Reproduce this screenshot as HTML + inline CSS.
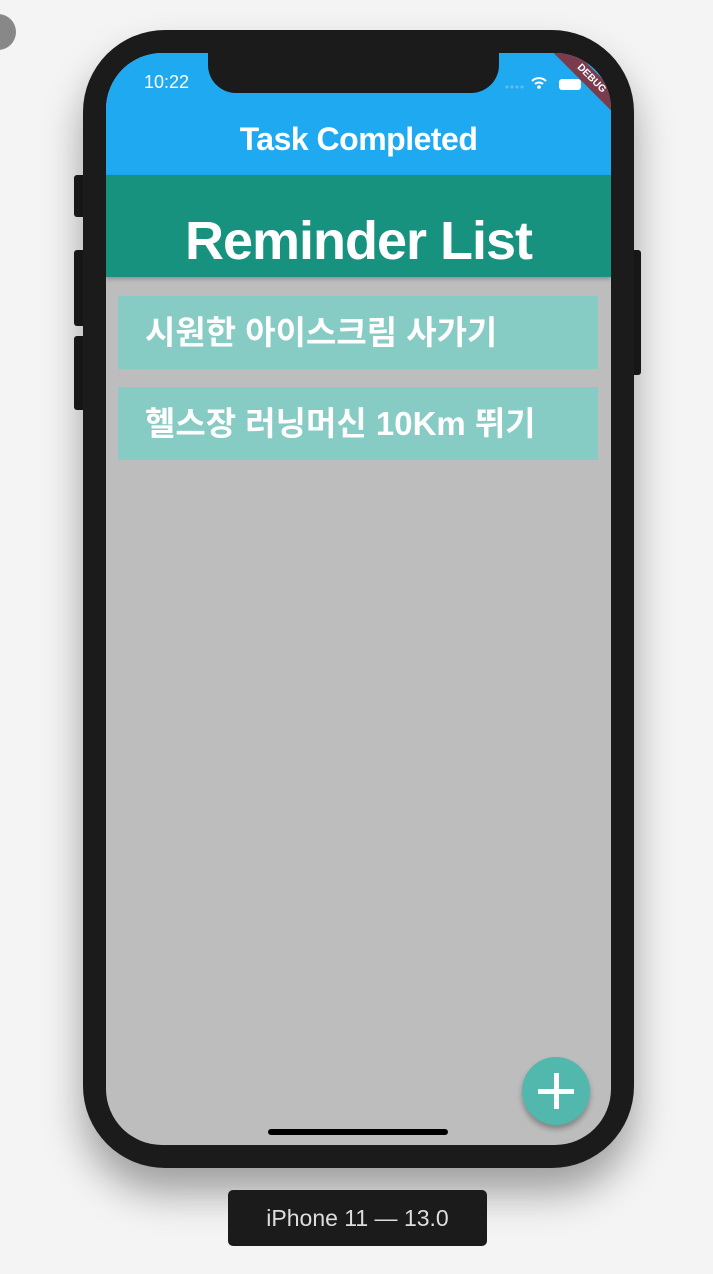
<!DOCTYPE html>
<html><head><meta charset="utf-8"><style>
body{margin:0;width:713px;height:1274px;background:#f4f4f4;position:relative;overflow:hidden;font-family:"Liberation Sans","Noto Sans CJK KR",sans-serif}
.btn{position:absolute;background:#1b1b1b;border-radius:3px}
.phone{position:absolute;left:83px;top:30px;width:551px;height:1138px;background:#1b1b1b;border-radius:82px;box-shadow:0 25px 40px rgba(0,0,0,.35)}
.screen{position:absolute;left:106px;top:53px;width:505px;height:1092px;border-radius:56px;overflow:hidden;background:#bdbdbd}
.bar{position:absolute;left:0;top:0;width:505px;height:122px;background:#1ea9f0}
.notch{position:absolute;left:102px;top:0;width:291px;height:40px;background:#1b1b1b;border-radius:0 0 28px 28px}
.teal{position:absolute;left:0;top:122px;width:505px;height:102px;background:#16927f;box-shadow:0 2px 4px rgba(0,0,0,.25)}
.item{position:absolute;left:12px;width:480px;height:73px;background:#86cbc4;color:#fff;font-size:33px;font-weight:bold;line-height:73px;padding-left:27px;box-sizing:border-box;margin-top:-4px;white-space:nowrap}
.fab{position:absolute;left:416px;top:1004px;width:68px;height:68px;border-radius:50%;background:#52b7ad;box-shadow:0 4px 6px rgba(0,0,0,.3)}
</style></head><body>
<div class="btn" style="left:74px;top:175px;width:12px;height:42px"></div>
<div class="btn" style="left:74px;top:250px;width:12px;height:76px"></div>
<div class="btn" style="left:74px;top:336px;width:12px;height:74px"></div>
<div class="btn" style="left:631px;top:250px;width:10px;height:125px"></div>
<div class="phone"></div>
<div class="screen">
<div class="bar"></div>
<div class="notch"></div>
<div style="position:absolute;left:38px;top:19px;color:#fff;font-size:18px">10:22</div>
<svg style="position:absolute;left:398px;top:20px" width="90" height="20"><g fill="#5bbff2"><circle cx="3" cy="14" r="1.6"/><circle cx="8" cy="14" r="1.6"/><circle cx="13" cy="14" r="1.6"/><circle cx="18" cy="14" r="1.6"/></g><path d="M28 8a10 10 0 0 1 14 0M31 11a6 6 0 0 1 8 0" stroke="#fff" stroke-width="2" fill="none"/><circle cx="35" cy="14" r="1.8" fill="#fff"/><rect x="55" y="6" width="22" height="11" rx="3" fill="#fff"/></svg>
<div style="position:absolute;left:430px;top:18px;width:110px;height:16px;background:#7a3b4c;transform:rotate(45deg);color:#fff;font-size:10px;font-weight:bold;text-align:center;line-height:16px">DEBUG</div>
<div style="position:absolute;left:0;top:68px;width:505px;text-align:center;color:#fff;font-size:32px;font-weight:bold;letter-spacing:-0.5px">Task Completed</div>
<div class="teal"><div style="position:absolute;left:0;top:32px;width:505px;text-align:center;color:#fff;font-size:54px;font-weight:bold;letter-spacing:-1px;line-height:68px">Reminder List</div></div>
<div class="item" style="top:247px">시원한 아이스크림 사가기</div>
<div class="item" style="top:338px">헬스장 러닝머신 10Km 뛰기</div>
<div class="fab"><div style="position:absolute;left:16px;top:32px;width:36px;height:5px;background:#fff"></div><div style="position:absolute;left:32px;top:16px;width:5px;height:36px;background:#fff"></div></div>
<div style="position:absolute;left:162px;top:1076px;width:180px;height:6px;border-radius:3px;background:#000"></div>
</div>
<div style="position:absolute;left:228px;top:1190px;width:259px;height:56px;background:#1b1b1b;border-radius:5px;color:#ddd;font-size:23px;text-align:center;line-height:56px">iPhone 11 — 13.0</div>
<div style="position:absolute;left:-20px;top:14px;width:36px;height:36px;border-radius:50%;background:#888"></div>
</body></html>
